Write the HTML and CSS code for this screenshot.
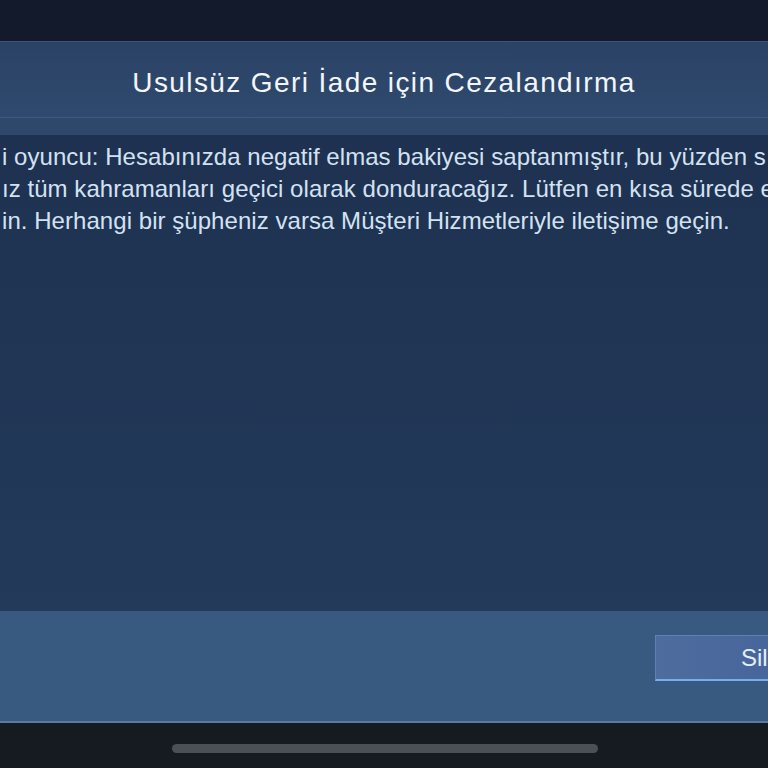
FILE: index.html
```html
<!DOCTYPE html>
<html lang="tr">
<head>
  <meta charset="UTF-8" />
  <title>Usulsüz Geri İade için Cezalandırma</title>
  <meta name="viewport" content="width=device-width, initial-scale=1" />
  <link rel="stylesheet" href="styles.css">
</head>
<body>
  <div class="screen">
    <div class="topbar"></div>

    <section class="dialog">
      <header class="dialog-head">
        <h1>Usulsüz Geri İade için Cezalandırma</h1>
      </header>
      <div class="head-strip"></div>

      <div class="dialog-body">
        <p class="line">i oyuncu: Hesabınızda negatif elmas bakiyesi saptanmıştır, bu yüzden s</p>
        <p class="line">ız tüm kahramanları geçici olarak donduracağız. Lütfen en kısa sürede e</p>
        <p class="line">in. Herhangi bir şüpheniz varsa Müşteri Hizmetleriyle iletişime geçin.</p>
      </div>

      <footer class="dialog-foot">
        <button class="btn">Sil</button>
      </footer>
    </section>

    <div class="bottombar">
      <div class="home-indicator"></div>
    </div>
  </div>
</body>
</html>
```

FILE: styles.css
```css
html, body {
  margin: 0;
  height: 100%;
  overflow: hidden;
}
body {
  background: #131a2a;
  font-family: 'Liberation Sans', Arial, sans-serif;
}
.screen {
  height: 768px;
  display: flex;
  flex-direction: column;
}
.topbar {
  height: 41px;
  background: #131a2b;
}

/* fenetre de dialogue */
.dialog {
  display: flex;
  flex-direction: column;
  height: 682px;
}
.dialog-head {
  height: 76px;
  background: linear-gradient(#2a4265, #2f4a6e);
  border-top: 1px solid #3a5679;
  display: flex;
  align-items: center;
  justify-content: center;
  padding-top: 6px;
  box-sizing: border-box;
}
.dialog-head h1 {
  margin: 0;
  font-weight: 400;
  font-size: 28px;
  letter-spacing: 1.4px;
  color: #f2f6fb;
}
.head-strip {
  height: 17px;
  background: #2e486b;
  border-top: 1px solid #3c5a80;
}
.dialog-body {
  flex: 1;
  background: linear-gradient(#1e3150, #233a5a);
  padding: 6px 0 0 2px;
  overflow: hidden;
}
.line {
  margin: 0;
  font-size: 24px;
  letter-spacing: 0.05px;
  line-height: 32px;
  color: #d3e2f3;
  white-space: nowrap;
}
.dialog-foot {
  height: 110px;
  background: #385a80;
  border-bottom: 2px solid #5b7ba3;
  display: flex;
  align-items: center;
  justify-content: flex-end;
  overflow: hidden;
}
.btn {
  width: 160px;
  height: 46px;
  margin-right: -47px;
  margin-top: -16px;
  border: 1px solid #5f80b3;
  border-bottom: 2px solid #79aeea;
  background: linear-gradient(90deg, #4f6c9e, #44639a);
  color: #e3eefa;
  font-family: inherit;
  font-size: 24px;
  text-align: left;
  padding-left: 85px;
}

.bottombar {
  flex: 1;
  background: #161b22;
  display: flex;
  justify-content: center;
  padding-top: 21px;
}
.home-indicator {
  width: 426px;
  height: 9px;
  border-radius: 5px;
  background: #4b4f56;
  margin-left: 2px;
}
```
